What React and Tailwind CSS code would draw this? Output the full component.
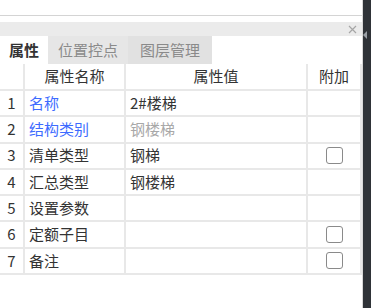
import React from 'react';

const rows = [
  { no: 1, name: '名称', value: '2#楼梯', blue: true },
  { no: 2, name: '结构类别', value: '钢楼梯', blue: true, muted: true },
  { no: 3, name: '清单类型', value: '钢梯', check: true },
  { no: 4, name: '汇总类型', value: '钢楼梯' },
  { no: 5, name: '设置参数', value: '' },
  { no: 6, name: '定额子目', value: '', check: true },
  { no: 7, name: '备注', value: '', check: true },
];

const Checkbox = () => (
  <div className="w-[17px] h-[17px] rounded-[3px] border border-[#8a8a8a] bg-white" />
);

const App = () => {
  return (
    <div
      className="w-[371px] h-[308px] bg-white flex overflow-hidden text-[15px] text-[#333]"
      style={{ fontFamily: '"Noto Sans CJK SC", "Noto Sans", sans-serif' }}
    >
      {/* Panel */}
      <div className="flex-1 flex flex-col border-r border-[#d8d8d8]">
        <div className="h-[16px] border-b border-[#d4d4d4]" />
        <div className="h-[6px]" />
        {/* title bar */}
        <div className="h-[14px] bg-[#ebebeb] flex items-center justify-end pr-[4px]">
          <svg width="9" height="9" viewBox="0 0 9 9" className="mr-[1px]">
            <path d="M1 1 L8 8 M8 1 L1 8" stroke="#a6a6a6" strokeWidth="1.2" />
          </svg>
        </div>
        {/* tabs */}
        <div className="h-[28px] flex items-stretch">
          <div className="w-[48px] bg-white flex items-center justify-center font-bold text-[#333]">属性</div>
          <div className="w-[80px] bg-[#e6e6e6] flex items-center justify-center text-[#8a8a8a]">位置控点</div>
          <div className="w-[84px] bg-[#e1e1e1] flex items-center justify-center text-[#8a8a8a]">图层管理</div>
          <div className="flex-1 bg-white" />
        </div>
        {/* table */}
        <div className="w-[362px]">
          <div className="grid grid-cols-[25px_101px_182px_1fr] h-[27px] border-b-2 border-[#e8e8e8]">
            <div className="border-r-2 border-[#e8e8e8]" />
            <div className="border-r-2 border-[#e8e8e8] flex items-center justify-center">属性名称</div>
            <div className="border-r-2 border-[#e8e8e8] flex items-center justify-center">属性值</div>
            <div className="border-r-2 border-[#e8e8e8] flex items-center justify-center">附加</div>
          </div>
          {rows.map((r) => (
            <div key={r.no} className="grid grid-cols-[25px_101px_182px_1fr] h-[26.3px] border-b-2 border-[#e8e8e8]">
              <div className="border-r-2 border-[#e8e8e8] flex items-center justify-center">{r.no}</div>
              <div className={`border-r-2 border-[#e8e8e8] flex items-center pl-[4px] ${r.blue ? 'text-[#3d6bff]' : ''}`}>
                {r.name}
              </div>
              <div className={`border-r-2 border-[#e8e8e8] flex items-center pl-[4px] ${r.muted ? 'text-[#a8a8a8]' : ''}`}>
                {r.value}
              </div>
              <div className="border-r-2 border-[#e8e8e8] flex items-center justify-center">
                {r.check && <Checkbox />}
              </div>
            </div>
          ))}
        </div>
      </div>
      {/* dark side bar */}
      <div className="w-[8px] bg-[#2f3338] flex flex-col">
        <div className="h-[31px]" />
        <svg width="4" height="8" viewBox="0 0 4 8">
          <path d="M4 0 L0 4 L4 8 Z" fill="#9aa0a6" />
        </svg>
      </div>
    </div>
  );
};

export default App;
